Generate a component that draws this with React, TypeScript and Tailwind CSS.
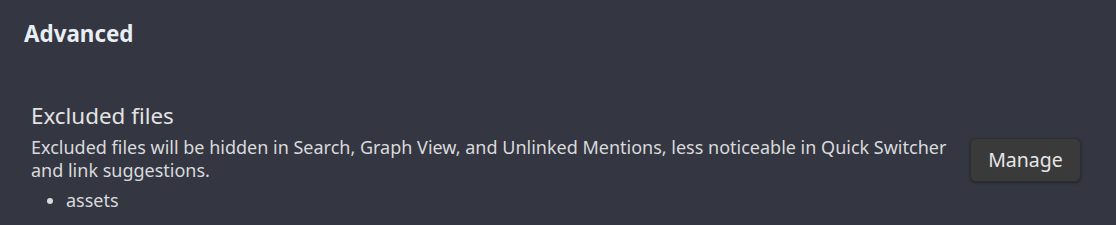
import React from "react";

export default function App(): JSX.Element {
  return (
    <div
      className="w-[1116px] h-[225px] overflow-hidden bg-[#343641] text-[#dcddde]"
      style={{ fontFamily: '"Noto Sans", "Open Sans", sans-serif' }}
    >
      <div className="pl-[24px] pt-[19px]">
        <h2 className="font-bold text-[22.4px] leading-[30px] text-[#e9eef4]">Advanced</h2>
      </div>
      <div className="flex items-start pl-[31px] pr-[35px] pt-[52px]">
        <div className="flex-1 pr-[16px]">
          <div className="text-[22.4px] leading-[30px] text-[#e3e3e3]">Excluded files</div>
          <div className="mt-[5px] text-[18px] leading-[23px] text-[#d9dadc]">
            Excluded files will be hidden in Search, Graph View, and Unlinked Mentions, less
            noticeable in Quick Switcher and link suggestions.
            <ul className="list-disc pl-[35px] mt-[7px]">
              <li>assets</li>
            </ul>
          </div>
        </div>
        <button className="mt-[37px] w-[111px] h-[44px] shrink-0 rounded-[6px] bg-[#3a3a3b] border border-[#2e2e30] shadow-[0_1px_3px_rgba(0,0,0,0.35)] text-[19.5px] text-[#e6e6e6]">
          Manage
        </button>
      </div>
    </div>
  );
}
